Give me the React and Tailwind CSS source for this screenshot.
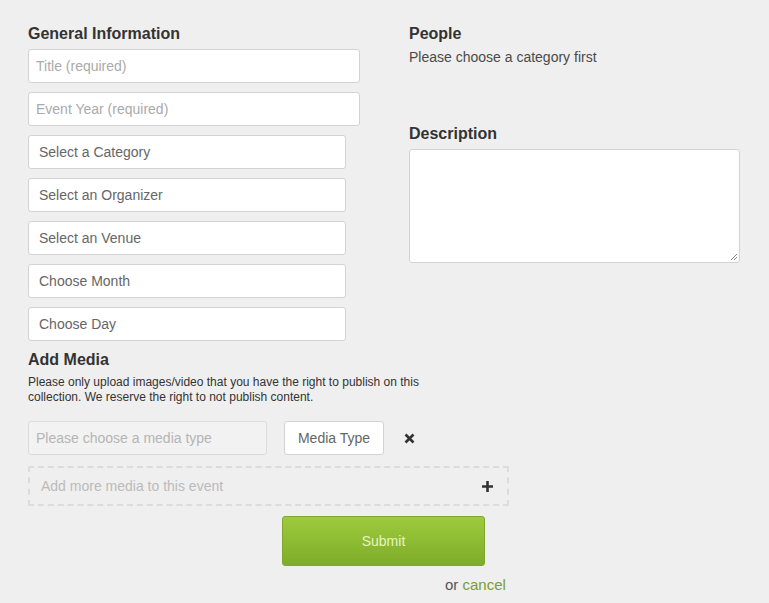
import React from "react";

const font = { fontFamily: '"Liberation Sans", Arial, sans-serif' };

function Field({ children, className = "" }) {
  return (
    <div
      className={
        "h-[34px] flex items-center rounded-[3px] border border-[#d3d3d3] bg-white text-[14px] " +
        className
      }
    >
      {children}
    </div>
  );
}

export default function App() {
  const selects = [
    "Select a Category",
    "Select an Organizer",
    "Select an Venue",
    "Choose Month",
    "Choose Day",
  ];
  return (
    <div
      className="w-[769px] h-[603px] bg-[#efefef] text-[#333] overflow-hidden"
      style={font}
    >
      <div className="flex pl-[28px] pt-[25px]">
        <div className="w-[332px] flex flex-col">
          <h2 className="text-[16px] font-bold leading-[18px] text-[#333] mb-[6px]">
            General Information
          </h2>
          <div className="flex flex-col gap-[9px]">
            <Field className="pl-[7px] text-[#aaa]">Title (required)</Field>
            <Field className="pl-[7px] text-[#aaa]">Event Year (required)</Field>
            {selects.map((s) => (
              <Field key={s} className="w-[318px] pl-[10px] text-[#666]">
                {s}
              </Field>
            ))}
          </div>
        </div>
        <div className="ml-[49px] w-[331px] flex flex-col">
          <h2 className="text-[16px] font-bold leading-[18px] text-[#333]">People</h2>
          <p className="text-[14px] text-[#4a4a4a] mt-[6px] leading-[16px]">
            Please choose a category first
          </p>
          <h2 className="text-[16px] font-bold leading-[18px] text-[#333] mt-[60px]">
            Description
          </h2>
          <div className="relative mt-[6px] h-[114px] rounded-[3px] border border-[#d3d3d3] bg-white">
            <svg
              className="absolute right-[1px] bottom-[1px]"
              width="9"
              height="9"
              viewBox="0 0 9 9"
            >
              <path d="M8 2 L2 8 M8 5 L5 8" stroke="#888" strokeWidth="1" />
            </svg>
          </div>
        </div>
      </div>

      <div className="pl-[28px] mt-[10px]">
        <h2 className="text-[16px] font-bold leading-[18px] text-[#333]">Add Media</h2>
        <p className="text-[12px] leading-[15px] text-[#333] mt-[6px] w-[410px]">
          Please only upload images/video that you have the right to publish on this
          collection. We reserve the right to not publish content.
        </p>
        <div className="flex items-center mt-[16px]">
          <div className="w-[239px] h-[34px] flex items-center pl-[7px] rounded-[3px] border border-[#dcdcdc] bg-[#f2f2f2] text-[14px] text-[#b5b5b5]">
            Please choose a media type
          </div>
          <div className="ml-[17px] w-[100px] h-[34px] flex items-center justify-center rounded-[3px] border border-[#d3d3d3] bg-white text-[14px] text-[#666]">
            Media Type
          </div>
          <svg className="ml-[20px]" width="11" height="11" viewBox="0 0 11 11">
            <path d="M1.5 1.5 L9.5 9.5 M9.5 1.5 L1.5 9.5" stroke="#333" strokeWidth="2.6" />
          </svg>
        </div>
        <div className="mt-[11px] w-[481px] h-[40px] flex items-center justify-between pl-[11px] pr-[14px] border-2 border-dashed border-[#dcdcdc] rounded-[2px] text-[14px] text-[#bbb]">
          <span>Add more media to this event</span>
          <svg width="11" height="11" viewBox="0 0 11 11">
            <path d="M5.5 0 V11 M0 5.5 H11" stroke="#333" strokeWidth="2.6" />
          </svg>
        </div>
        <div className="ml-[254px] mt-[10px] w-[203px] h-[50px] flex items-center justify-center rounded-[3px] border border-[#7fa62e] bg-gradient-to-b from-[#9ecb3c] to-[#7dac29] text-[14px] text-[#e6f4c4]">
          Submit
        </div>
        <div className="ml-[417px] mt-[10px] text-[15px] leading-[18px]">
          <span className="text-[#555]">or </span>
          <span className="text-[#78a028]">cancel</span>
        </div>
      </div>
    </div>
  );
}
